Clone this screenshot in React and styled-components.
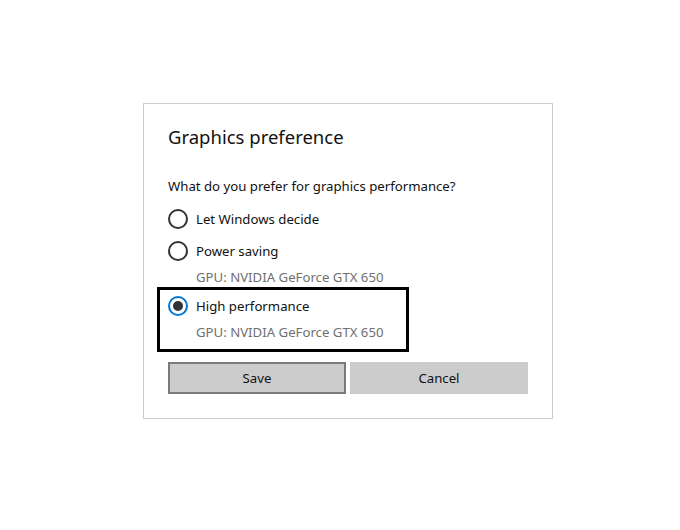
import React from 'react'
import styled, { createGlobalStyle } from 'styled-components'

const GlobalStyle = createGlobalStyle`
	html, body {
		margin: 0;
		padding: 0;
		background: #ffffff;
	}
	body {
		font-family: 'Noto Sans', 'Open Sans', Arial, sans-serif;
		color: #000000;
	}
`

const options = [
	{ id: 'auto', label: 'Let Windows decide' },
	{ id: 'power', label: 'Power saving', gpu: 'GPU: NVIDIA GeForce GTX 650' },
	{ id: 'high', label: 'High performance', gpu: 'GPU: NVIDIA GeForce GTX 650' },
]

const App = () => {
	const selected = 'high'
	return (
		<Page>
			<GlobalStyle />
			<Dialog>
				<Title>Graphics preference</Title>
				<Question>What do you prefer for graphics performance?</Question>
				<OptionList>
					{options.map((opt, i) => (
						<Option key={opt.id} $focused={opt.id === selected} $first={i === 0}>
							<RadioRow>
								<Radio $checked={opt.id === selected} />
								<Label>{opt.label}</Label>
							</RadioRow>
							{opt.gpu && <Gpu>{opt.gpu}</Gpu>}
						</Option>
					))}
				</OptionList>
				<Buttons>
					<Button $primary>Save</Button>
					<Button>Cancel</Button>
				</Buttons>
			</Dialog>
		</Page>
	)
}

export default App

const Page = styled.div`
	width: 680px;
	height: 530px;
	box-sizing: border-box;
	padding: 103px 0 0 143px;
`

const Dialog = styled.div`
	width: 410px;
	box-sizing: border-box;
	border: 1px solid #cccccc;
	padding: 19px 24px 24px 24px;
	background: #ffffff;
`

const Title = styled.h2`
	margin: 0;
	font-size: 18.5px;
	line-height: 28px;
	font-weight: normal;
	color: #111111;
`

const Question = styled.div`
	margin-top: 25px;
	font-size: 13.2px;
	line-height: 20px;
	color: #111111;
`

const OptionList = styled.div`
	margin-top: 13px;
	display: flex;
	flex-direction: column;
`

const Option = styled.div`
	margin-top: ${(p) => (p.$first ? '0' : '12px')};
	${(p) =>
		p.$focused &&
		`
		margin-top: 0;
		margin-left: -11px;
		width: 252px;
		box-sizing: border-box;
		border: 3px solid #000000;
		padding: 6px 8px 7px 8px;
	`}
`

const RadioRow = styled.div`
	display: flex;
	align-items: center;
	gap: 8px;
	height: 20px;
`

const Radio = styled.span`
	width: 20px;
	height: 20px;
	box-sizing: border-box;
	border-radius: 50%;
	border: 2px solid ${(p) => (p.$checked ? '#0078d7' : '#333333')};
	display: flex;
	align-items: center;
	justify-content: center;
	flex-shrink: 0;
	&::after {
		content: '';
		display: ${(p) => (p.$checked ? 'block' : 'none')};
		width: 10px;
		height: 10px;
		border-radius: 50%;
		background: #333333;
	}
`

const Label = styled.span`
	font-size: 13.2px;
	line-height: 20px;
	color: #111111;
`

const Gpu = styled.div`
	margin-top: 6px;
	padding-left: 28px;
	font-size: 13.2px;
	line-height: 20px;
	color: #707070;
`

const Buttons = styled.div`
	margin-top: 10px;
	display: grid;
	grid-template-columns: 1fr 1fr;
	gap: 4px;
`

const Button = styled.button`
	height: 32px;
	box-sizing: border-box;
	border: 2px solid ${(p) => (p.$primary ? '#7a7a7a' : '#cccccc')};
	background: #cccccc;
	font-family: 'Noto Sans', 'Open Sans', Arial, sans-serif;
	font-size: 13.2px;
	color: #111111;
	padding: 0;
	cursor: pointer;
`
